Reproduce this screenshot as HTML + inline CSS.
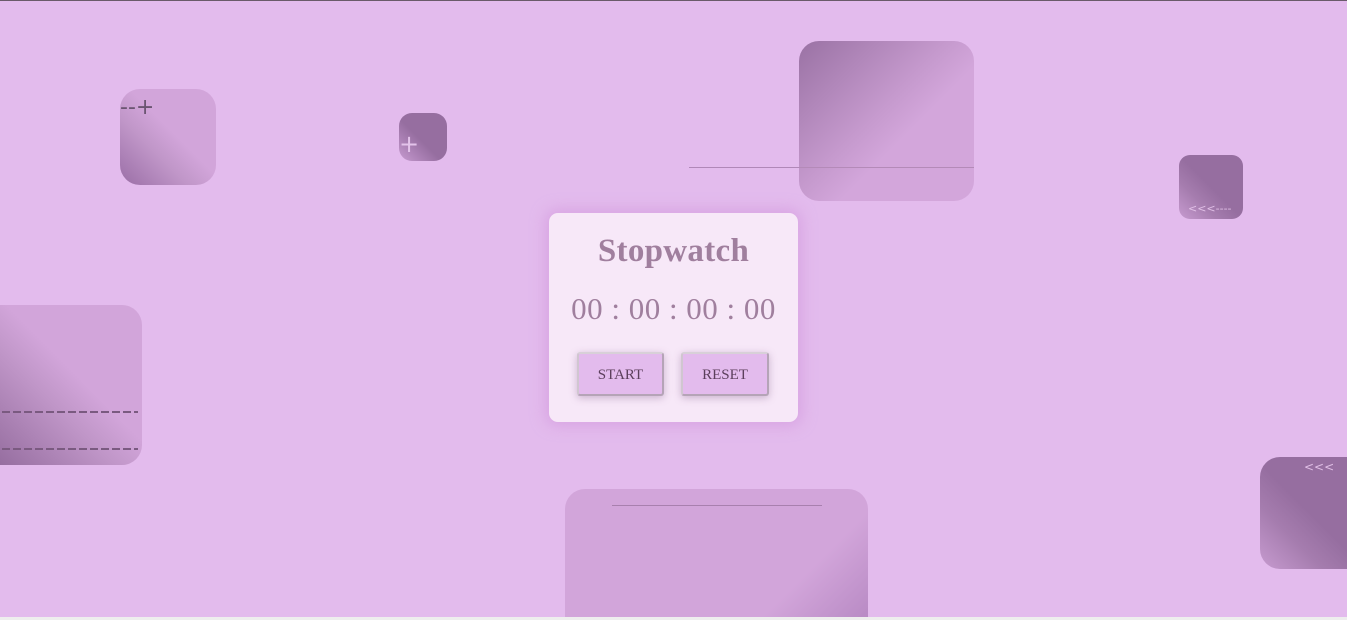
<!DOCTYPE html>
<html><head><meta charset="utf-8"><style>
*{margin:0;padding:0;box-sizing:border-box}
html,body{width:1347px;height:620px;overflow:hidden}
body{background:#e3bbed;position:relative;font-family:"Liberation Serif",serif}
.top{position:absolute;left:0;top:0;width:1347px;height:1px;background:#6a5a6a}
.bot{position:absolute;left:0;top:617px;width:1347px;height:3px;background:#eee}
.s{position:absolute;overflow:hidden}
.t{position:absolute;font-family:"DejaVu Sans",sans-serif;white-space:nowrap}
.card{position:absolute;left:549px;top:213px;width:249px;height:209px;background:#f7e8f8;border-radius:9px;box-shadow:0 0 14px 4px rgba(210,150,220,.6);text-align:center;color:#a07f9e}
.card h1{position:absolute;top:20px;width:100%;font-size:33px;font-weight:bold;letter-spacing:0.3px}
.time{position:absolute;top:78px;width:100%;font-size:31px;letter-spacing:0.5px}
.btn{position:absolute;top:139px;height:44px;background:#e3bbed;border:2px solid #b5a4b7;border-top-color:#d8d0d8;border-left-color:#d0c6d0;border-radius:3px;box-shadow:0 2px 8px rgba(120,80,130,.35);color:#5c3f5c;font-size:15px;line-height:42px;text-align:center}
</style></head><body>
<div class="top"></div>
<div class="s" style="left:120px;top:89px;width:96px;height:96px;border-radius:20px;background:linear-gradient(45deg,#9a6ea6 0%,#c096c8 35%,#d2a5da 55%)"><div class="t" style="left:0;top:6px;font-size:22px;color:#6b5572">--+</div></div>
<div class="s" style="left:399px;top:113px;width:48px;height:48px;border-radius:13px;background:linear-gradient(45deg,#c79bd0 0%,#a67cb0 30%,#966ea0 45%)"><div class="t" style="left:0;top:17px;font-size:24px;color:#e3c3ea">+</div></div>
<div style="position:absolute;left:689px;top:167px;width:285px;height:1px;background:#b088b8"></div>
<div class="s" style="left:799px;top:41px;width:175px;height:160px;border-radius:20px;background:linear-gradient(135deg,#966ea0 0%,#c498cc 45%,#d2a5da 60%);opacity:.95"></div>
<div style="position:absolute;left:799px;top:167px;width:175px;height:1px;background:#b48ab8"></div>
<div class="s" style="left:1179px;top:155px;width:64px;height:64px;border-radius:11px;background:linear-gradient(45deg,#c79bd0 0%,#a57cae 30%,#966ea0 50%)"><div class="t" style="left:9px;top:47px;font-size:11px;color:#e0bfe6">&lt;&lt;&lt;----</div></div>
<div class="s" style="left:0;top:305px;width:142px;height:160px;border-radius:0 20px 20px 0;background:linear-gradient(45deg,#966ea0 0%,#c096c8 38%,#d2a5da 55%)">
<div style="position:absolute;left:2px;top:106px;width:136px;height:2px;background:repeating-linear-gradient(90deg,#7a5a80 0 8px,transparent 8px 11px)"></div>
<div style="position:absolute;left:2px;top:143px;width:136px;height:2px;background:repeating-linear-gradient(90deg,#7a5a80 0 8px,transparent 8px 11px)"></div></div>
<div class="s" style="left:1260px;top:457px;width:100px;height:112px;border-radius:20px 0 0 20px;background:linear-gradient(45deg,#c79bd0 0%,#a57cae 30%,#966ea0 50%)"><div class="t" style="left:44px;top:3px;font-size:12px;color:#e0bfe6">&lt;&lt;&lt;</div></div>
<div class="s" style="left:565px;top:489px;width:303px;height:131px;border-radius:20px 20px 0 0;background:linear-gradient(135deg,#d2a5da 0%,#d2a5da 75%,#b88ac4 100%)"><div style="position:absolute;left:47px;top:16px;width:210px;height:1px;background:#a880ae"></div></div>
<div class="card"><h1>Stopwatch</h1><div class="time">00 : 00 : 00 : 00</div>
<div class="btn" style="left:28px;width:87px">START</div>
<div class="btn" style="left:132px;width:88px">RESET</div></div>
<div class="bot"></div>
</body></html>
